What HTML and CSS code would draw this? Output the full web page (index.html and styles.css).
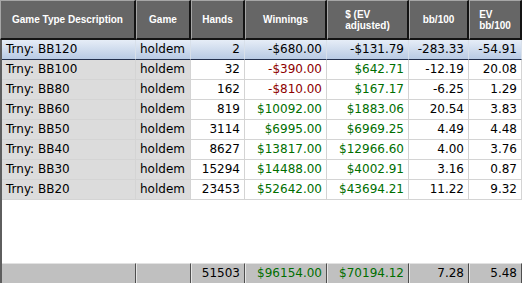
FILE: index.html
```html
<!DOCTYPE html>
<html>
<head>
<meta charset="utf-8">
<link rel="stylesheet" href="styles.css">
</head>
<body>
<div class="grid">
  <div class="head">
    <div class="hc"><span>Game Type Description</span></div>
    <div class="hc"><span>Game</span></div>
    <div class="hc"><span>Hands</span></div>
    <div class="hc"><span>Winnings</span></div>
    <div class="hc"><span>$ (EV<br>adjusted)</span></div>
    <div class="hc"><span>bb/100</span></div>
    <div class="hc"><span>EV<br>bb/100</span></div>
  </div>
  <div class="body">
    <div class="row sel">
      <div class="c t">Trny: BB120</div><div class="c t">holdem</div><div class="c n">2</div><div class="c n">-$680.00</div><div class="c n">-$131.79</div><div class="c n">-283.33</div><div class="c n">-54.91</div>
    </div>
    <div class="row">
      <div class="c t">Trny: BB100</div><div class="c t">holdem</div><div class="c n">32</div><div class="c n neg">-$390.00</div><div class="c n pos">$642.71</div><div class="c n">-12.19</div><div class="c n">20.08</div>
    </div>
    <div class="row">
      <div class="c t">Trny: BB80</div><div class="c t">holdem</div><div class="c n">162</div><div class="c n neg">-$810.00</div><div class="c n pos">$167.17</div><div class="c n">-6.25</div><div class="c n">1.29</div>
    </div>
    <div class="row">
      <div class="c t">Trny: BB60</div><div class="c t">holdem</div><div class="c n">819</div><div class="c n pos">$10092.00</div><div class="c n pos">$1883.06</div><div class="c n">20.54</div><div class="c n">3.83</div>
    </div>
    <div class="row">
      <div class="c t">Trny: BB50</div><div class="c t">holdem</div><div class="c n">3114</div><div class="c n pos">$6995.00</div><div class="c n pos">$6969.25</div><div class="c n">4.49</div><div class="c n">4.48</div>
    </div>
    <div class="row">
      <div class="c t">Trny: BB40</div><div class="c t">holdem</div><div class="c n">8627</div><div class="c n pos">$13817.00</div><div class="c n pos">$12966.60</div><div class="c n">4.00</div><div class="c n">3.76</div>
    </div>
    <div class="row">
      <div class="c t">Trny: BB30</div><div class="c t">holdem</div><div class="c n">15294</div><div class="c n pos">$14488.00</div><div class="c n pos">$4002.91</div><div class="c n">3.16</div><div class="c n">0.87</div>
    </div>
    <div class="row">
      <div class="c t">Trny: BB20</div><div class="c t">holdem</div><div class="c n">23453</div><div class="c n pos">$52642.00</div><div class="c n pos">$43694.21</div><div class="c n">11.22</div><div class="c n">9.32</div>
    </div>
    <div class="filler"></div>
    <div class="row foot">
      <div class="f"></div><div class="f"></div><div class="f n">51503</div><div class="f n pos">$96154.00</div><div class="f n pos">$70194.12</div><div class="f n">7.28</div><div class="f n">5.48</div>
    </div>
  </div>
</div>
</body>
</html>
```

FILE: styles.css
```css
html, body {
  margin: 0;
  padding: 0;
  background: #ffffff;
}
.grid {
  width: 522px;
  height: 283px;
  display: flex;
  flex-direction: column;
  overflow: hidden;
  font-family: "DejaVu Sans", sans-serif;
  font-size: 12px;
  color: #000;
}
.head {
  display: grid;
  grid-template-columns: 136px 55px 54px 82px 82px 60px 53px;
  height: 40px;
}
.hc {
  box-sizing: border-box;
  background: #666666;
  border-top: 1px solid #a6a6a6;
  border-left: 1px solid #a6a6a6;
  border-right: 2px solid #141414;
  border-bottom: 2px solid #141414;
  display: flex;
  align-items: center;
  justify-content: center;
  font-family: "Liberation Sans", Arial, sans-serif;
  font-weight: bold;
  font-size: 10px;
  line-height: 11px;
  color: #ffffff;
}
.hc span {
  display: inline-block;
  text-align: left;
}
.body {
  flex: 1;
  display: flex;
  flex-direction: column;
  border-left: 2px solid #5e5e5e;
}
.row {
  display: grid;
  grid-template-columns: 134px 55px 54px 82px 82px 60px 53px;
  height: 20px;
}
.c {
  box-sizing: border-box;
  height: 20px;
  border-right: 1px solid #d4d4d4;
  border-bottom: 1px solid #d4d4d4;
  line-height: 19px;
  white-space: nowrap;
  overflow: hidden;
}
.row .c:nth-child(1), .row .c:nth-child(2) {
  background: #dcdcdc;
}
.t {
  padding-left: 4px;
}
.n {
  text-align: right;
  padding-right: 4px;
}
.neg { color: #8e0000; }
.pos { color: #006e00; }
.row.sel .c {
  background: linear-gradient(#e6edf7, #b9cbe4);
  border-bottom: 1px solid #24314d;
  border-right-color: #d8e0ea;
}
.row.sel .c:nth-child(1), .row.sel .c:nth-child(2) {
  background: linear-gradient(#e6edf7, #b9cbe4);
}
.filler {
  flex: 1;
}
.foot .f {
  box-sizing: border-box;
  height: 20px;
  background: #c0c0c0;
  border-top: 1px solid #e2e2e2;
  border-left: 1px solid #e6e6e6;
  border-right: 1px solid #4e4e4e;
  line-height: 19px;
  white-space: nowrap;
}
.foot .f.n {
  padding-right: 4px;
}
.foot .f:first-child {
  border-left: none;
}
```
